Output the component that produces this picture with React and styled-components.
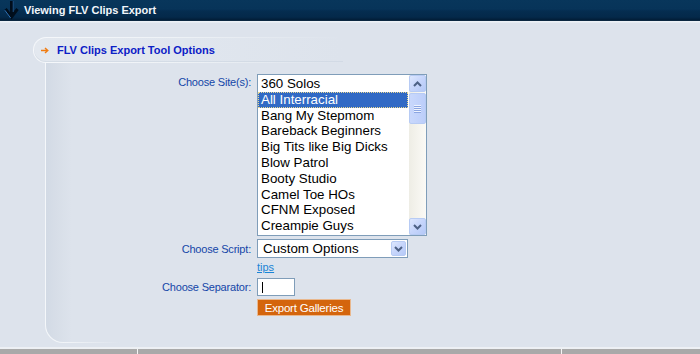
import React from 'react';
import styled, { createGlobalStyle } from 'styled-components';

const Global = createGlobalStyle`
  html, body { margin: 0; padding: 0; }
  body {
    width: 700px; height: 354px; overflow: hidden;
    background: #dde3ec;
    font-family: "Liberation Sans", Arial, sans-serif;
  }
`;

const Page = styled.div`
  display: flex; flex-direction: column;
  width: 700px; height: 354px;
`;

const Header = styled.header`
  flex: none; height: 20px;
  display: flex; align-items: center; gap: 5px;
  padding-left: 4px;
  background: linear-gradient(#08365b 0%, #073459 45%, #052d50 55%, #04294a 85%, #021d37 100%);
  border-bottom: 1px solid #0b2740;
`;

const HeaderTitle = styled.h1`
  margin: 0;
  font: bold 11px "Liberation Sans", Arial, sans-serif;
  color: #f2f6fb;
`;

const TopBand = styled.div`
  flex: none; height: 2px;
  background: linear-gradient(#f0f4f8, #e2e8ef);
`;

const Body = styled.main`
  flex: 1; display: flex; flex-direction: column;
  min-height: 0;
`;

const TabOuter = styled.div`
  flex: none;
  margin: 14px 0 0 33px;
  width: 310px; height: 26px;
  box-sizing: border-box;
  padding: 1px 0 1px 1px;
  border-radius: 13px 0 0 13px;
  background: linear-gradient(to right, #f6f8fb 0%, #eef2f6 45%, #dde3ec 100%);
`;

const TabInner = styled.div`
  height: 100%;
  display: flex; align-items: center; gap: 8px;
  padding-left: 7px;
  border-radius: 12px 0 0 12px;
  background: linear-gradient(to right, #e3e8ef 0%, #e0e6ee 50%, #dde3ec 100%);
  box-shadow: inset 0 -1px 0 rgba(200, 210, 222, 0.5);
`;

const TabTitle = styled.h2`
  margin: 0;
  font: bold 11px "Liberation Sans", Arial, sans-serif;
  color: #0c20c6;
`;

const PanelFrame = styled.section`
  flex: 1;
  margin: 0 0 4px 45px;
  padding: 0 0 1px 1px;
  border-radius: 0 0 0 18px;
  background: linear-gradient(to right, #f4f7fa 0px, #f0f3f7 25px, #dde3ec 75px);
  display: flex;
`;

const PanelInner = styled.div`
  flex: 1;
  border-radius: 0 0 0 17px;
  background: linear-gradient(to right, #d2dae5 0px, #d6dde7 8px, #dde3ec 26px);
  padding-top: 11px;
  display: flex; flex-direction: column;
`;

const FieldRow = styled.div`
  display: grid;
  grid-template-columns: 205px auto;
  column-gap: 6px;
  align-items: ${p => p.$align || 'center'};
  margin-top: ${p => p.$mt || 0}px;
`;

const Label = styled.label`
  justify-self: end;
  font-size: 11px;
  letter-spacing: -0.2px;
  color: #1446a8;
  padding-top: ${p => p.$pt || 0}px;
`;

const ListBox = styled.div`
  width: 170px; height: 162px;
  box-sizing: border-box;
  border: 1px solid #7f9db9;
  background: #fff;
  display: flex;
`;

const ListItems = styled.ul`
  flex: 1; margin: 0; padding: 1px 0 0; list-style: none;
  overflow: hidden;
`;

const ListItem = styled.li`
  height: 15.8px; line-height: 15.8px;
  padding-left: 3px;
  margin-right: 1px;
  font-size: 13.33px;
  white-space: nowrap;
  color: ${p => (p.$selected ? '#fff' : '#000')};
  background: ${p => (p.$selected ? '#316ac5' : 'transparent')};
  outline: ${p => (p.$selected ? '1px dotted #e9d892' : 'none')};
  outline-offset: -1px;
`;

const ScrollBar = styled.div`
  width: 17px; flex: none;
  display: flex; flex-direction: column;
  background: linear-gradient(to right, #eeede5, #fbfaf6);
`;

const ScrollButton = styled.div`
  flex: none;
  width: ${p => p.$size || 17}px; height: ${p => p.$size || 17}px;
  box-sizing: border-box;
  border: 1px solid #b7cbf4;
  border-radius: 2px;
  background: linear-gradient(135deg, #dde7fe 0%, #c6d5fb 50%, #b5c9f7 100%);
  display: flex; align-items: center; justify-content: center;
`;

const ScrollTrack = styled.div`
  flex: 1;
  padding-top: 1px;
`;

const Thumb = styled.div`
  height: 31px;
  box-sizing: border-box;
  border: 1px solid #b7cbf4;
  border-radius: 2px;
  background: linear-gradient(to right, #c9d8fc, #bccefa);
  display: flex; align-items: center; justify-content: center;
`;

const Grip = styled.div`
  width: 7px; height: 8px;
  background: repeating-linear-gradient(#eef3fe 0 1px, #8ca6e2 1px 2px);
`;

const Select = styled.div`
  width: 151px; height: 19px;
  box-sizing: border-box;
  border: 1px solid #7f9db9;
  background: #fff;
  display: flex; align-items: center;
  padding: 0 1px 0 5px;
  font-size: 13.33px;
  color: #000;
`;

const SelectText = styled.span`
  flex: 1;
`;

const TipsLink = styled.a`
  font-size: 11px;
  color: #1a84d6;
  text-decoration: underline;
  cursor: pointer;
`;

const SepInput = styled.div`
  width: 38px; height: 18px;
  box-sizing: border-box;
  border: 1px solid #7f9db9;
  background: #fff;
  display: flex; align-items: center;
  padding-left: 4px;
`;

const Caret = styled.span`
  width: 1px; height: 11px;
  background: #000;
`;

const ExportButton = styled.button`
  width: 94px; height: 17px;
  box-sizing: border-box;
  margin: 0; padding: 0;
  border: 1px solid #e9b88e;
  background: #d4650d;
  color: #fff;
  font: 11.5px "Liberation Sans", Arial, sans-serif;
  letter-spacing: -0.2px;
  display: flex; align-items: center; justify-content: center;
  cursor: pointer;
`;

const Footer = styled.footer`
  flex: none; height: 7px;
  box-sizing: border-box;
  border-top: 2px solid #edf0f4;
  display: flex;
`;

const FooterCell = styled.div`
  width: ${p => (p.$w ? `${p.$w}px` : 'auto')};
  flex: ${p => (p.$w ? 'none' : 1)};
  background: #a9a9a9;
  border-left: ${p => (p.$first ? 'none' : '1px solid #f5f5f5')};
`;

const Chevron = ({ up }) => (
  <svg width="9" height="6" viewBox="0 0 9 6">
    <path
      d={up ? 'M1 5 L4.5 1.5 L8 5' : 'M1 1 L4.5 4.5 L8 1'}
      fill="none"
      stroke="#4d6185"
      strokeWidth="2"
    />
  </svg>
);

const HeaderIcon = () => (
  <svg width="15" height="19" viewBox="0 0 15 19">
    <rect x="6" y="0" width="3" height="14" fill="#010e1c" />
    <path d="M1.5 8 L7.5 16 L13.5 8" fill="none" stroke="#010e1c" strokeWidth="3" />
    <path d="M0.8 9.2 L6.6 17" fill="none" stroke="#2e72b8" strokeWidth="1" />
    <path d="M9.2 0 L9.2 11" fill="none" stroke="#1d4f80" strokeWidth="1" />
  </svg>
);

const OrangeArrow = () => (
  <svg width="8" height="7" viewBox="0 0 8 7">
    <path d="M0 3.5 H6.5 M4 1 L6.8 3.5 L4 6" fill="none" stroke="#f07c12" strokeWidth="1.4" />
  </svg>
);

const sites = [
  '360 Solos',
  'All Interracial',
  'Bang My Stepmom',
  'Bareback Beginners',
  'Big Tits like Big Dicks',
  'Blow Patrol',
  'Booty Studio',
  'Camel Toe HOs',
  'CFNM Exposed',
  'Creampie Guys',
];

export default function App() {
  return (
    <>
      <Global />
      <Page>
        <Header>
          <HeaderIcon />
          <HeaderTitle>Viewing FLV Clips Export</HeaderTitle>
        </Header>
        <TopBand />
        <Body>
          <TabOuter>
            <TabInner>
              <OrangeArrow />
              <TabTitle>FLV Clips Export Tool Options</TabTitle>
            </TabInner>
          </TabOuter>
          <PanelFrame>
            <PanelInner>
              <FieldRow $align="start">
                <Label $pt={2}>Choose Site(s):</Label>
                <ListBox>
                  <ListItems>
                    {sites.map((s, i) => (
                      <ListItem key={s} $selected={i === 1}>{s}</ListItem>
                    ))}
                  </ListItems>
                  <ScrollBar>
                    <ScrollButton><Chevron up /></ScrollButton>
                    <ScrollTrack>
                      <Thumb><Grip /></Thumb>
                    </ScrollTrack>
                    <ScrollButton><Chevron /></ScrollButton>
                  </ScrollBar>
                </ListBox>
              </FieldRow>
              <FieldRow $mt={3}>
                <Label>Choose Script:</Label>
                <Select>
                  <SelectText>Custom Options</SelectText>
                  <ScrollButton $size={15}><Chevron /></ScrollButton>
                </Select>
              </FieldRow>
              <FieldRow $mt={3}>
                <span />
                <TipsLink>tips</TipsLink>
              </FieldRow>
              <FieldRow $mt={5}>
                <Label>Choose Separator:</Label>
                <SepInput><Caret /></SepInput>
              </FieldRow>
              <FieldRow $mt={3}>
                <span />
                <ExportButton>Export Galleries</ExportButton>
              </FieldRow>
            </PanelInner>
          </PanelFrame>
        </Body>
        <Footer>
          <FooterCell $w={137} $first />
          <FooterCell $w={423} />
          <FooterCell />
        </Footer>
      </Page>
    </>
  );
}
